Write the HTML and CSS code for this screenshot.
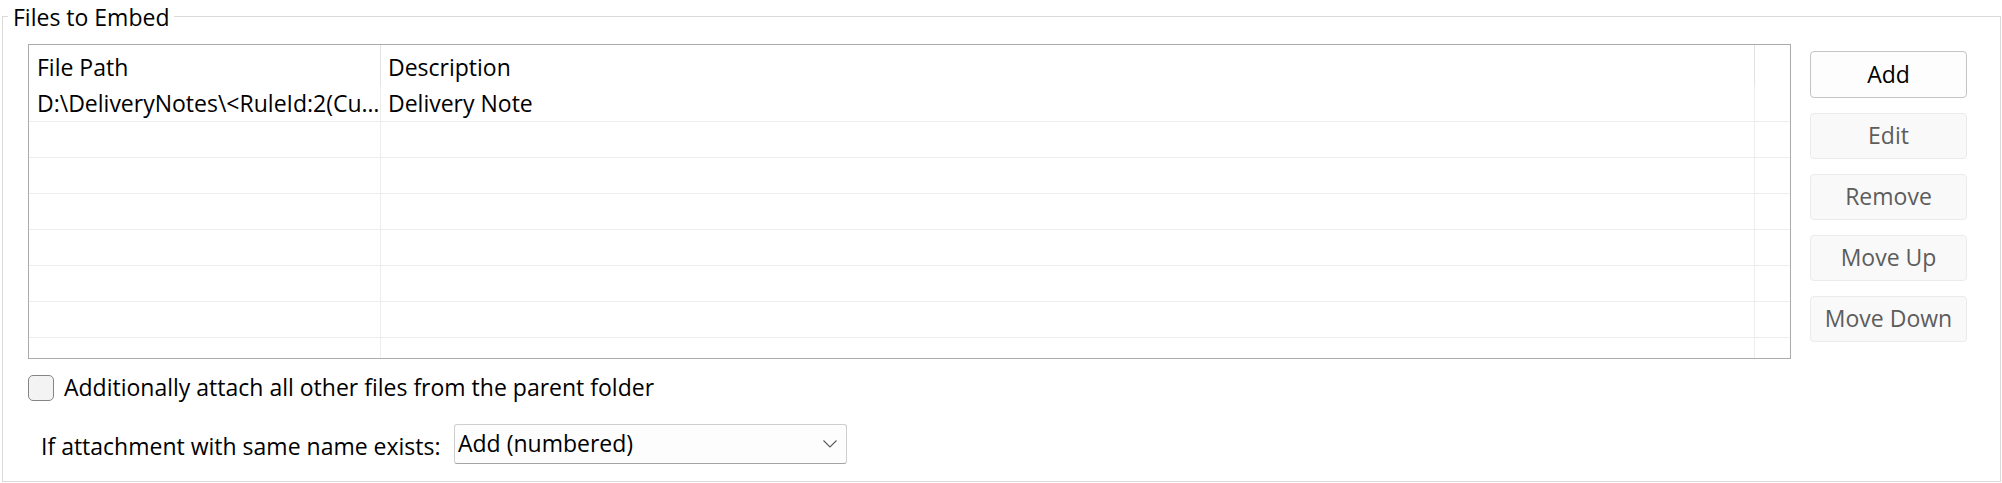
FILE: index.html
```html
<!DOCTYPE html>
<html>
<head>
<meta charset="utf-8">
<link rel="stylesheet" href="styles.css">
</head>
<body>
<div class="group">
  <div class="title">Files to Embed</div>
  <div class="top">
    <div class="list">
      <div class="row head">
        <div class="c c1">File Path</div>
        <div class="c c2">Description</div>
        <div class="c c3"></div>
      </div>
      <div class="row">
        <div class="c c1">D:\DeliveryNotes\&lt;RuleId:2(Cu…</div>
        <div class="c c2">Delivery Note</div>
        <div class="c c3"></div>
      </div>
      <div class="row"><div class="c c1"></div><div class="c c2"></div><div class="c c3"></div></div>
      <div class="row"><div class="c c1"></div><div class="c c2"></div><div class="c c3"></div></div>
      <div class="row"><div class="c c1"></div><div class="c c2"></div><div class="c c3"></div></div>
      <div class="row"><div class="c c1"></div><div class="c c2"></div><div class="c c3"></div></div>
      <div class="row"><div class="c c1"></div><div class="c c2"></div><div class="c c3"></div></div>
      <div class="row"><div class="c c1"></div><div class="c c2"></div><div class="c c3"></div></div>
      <div class="row"><div class="c c1"></div><div class="c c2"></div><div class="c c3"></div></div>
    </div>
    <div class="buttons">
      <div class="btn primary">Add</div>
      <div class="btn">Edit</div>
      <div class="btn">Remove</div>
      <div class="btn">Move Up</div>
      <div class="btn">Move Down</div>
    </div>
  </div>
  <div class="check">
    <span class="box"></span>
    <span class="check-label">Additionally attach all other files from the parent folder</span>
  </div>
  <div class="combo-row">
    <span class="combo-label">If attachment with same name exists:</span>
    <div class="combo">
      <span class="combo-text">Add (numbered)</span>
      <svg class="chev" width="14" height="8" viewBox="0 0 14 8"><polyline points="0.5,0.5 7,7 13.5,0.5" fill="none" stroke="#5a5a5a" stroke-width="1.1"/></svg>
    </div>
  </div>
</div>
</body>
</html>
```

FILE: styles.css
```css
html, body {
  margin: 0;
  padding: 0;
  background: #ffffff;
}
body {
  width: 2002px;
  height: 483px;
  overflow: hidden;
  font-family: "Open Sans", "Noto Sans", sans-serif;
  font-size: 23px;
  color: #000;
}
.group {
  position: relative;
  box-sizing: border-box;
  margin: 16px 0 0 2px;
  width: 1999px;
  height: 466px;
  border: 1px solid #dadada;
}
.title {
  position: absolute;
  top: -16px;
  left: 5px;
  padding: 0 5px;
  line-height: 32px;
  background: #fff;
  white-space: nowrap;
}
.top {
  display: flex;
  align-items: flex-start;
  margin: 27px 0 0 25px;
}
.list {
  box-sizing: border-box;
  width: 1763px;
  height: 315px;
  border: 1px solid #ababab;
  overflow: hidden;
  background: #fff;
}
.row {
  display: flex;
  box-sizing: border-box;
  height: 36px;
  border-bottom: 1px solid #ededed;
}
.row.head {
  height: 41px;
  border-bottom: none;
}
.c {
  box-sizing: border-box;
  padding-left: 7px;
  line-height: 35px;
  white-space: nowrap;
  overflow: hidden;
  border-right: 1px solid #ededed;
}
.head .c {
  line-height: 36px;
  padding-top: 4px;
  border-right-color: #e3e3e3;
}
.c1 { width: 352px; padding-left: 8px; }
.c2 { width: 1374px; }
.c3 { flex: 1; border-right: none; }
.buttons {
  display: flex;
  flex-direction: column;
  gap: 15px;
  margin: 7px 0 0 19px;
}
.btn {
  box-sizing: border-box;
  width: 157px;
  height: 46px;
  border: 1px solid #ebebeb;
  border-radius: 4px;
  background: #f9f9f9;
  color: #5d5d5d;
  display: flex;
  align-items: center;
  justify-content: center;
  padding-bottom: 2px;
}
.btn.primary {
  height: 47px;
  border-color: #c4c4c4;
  background: #fdfdfd;
  color: #000;
}
.check {
  display: flex;
  align-items: center;
  margin: 16px 0 0 25px;
  height: 26px;
}
.box {
  box-sizing: border-box;
  width: 26px;
  height: 26px;
  border: 1px solid #858585;
  border-radius: 5px;
  background: #f3f3f3;
}
.check-label {
  margin-left: 10px;
  padding-bottom: 2px;
}
.combo-row {
  display: flex;
  align-items: center;
  margin: 23px 0 0 38px;
}
.combo-label {
  width: 413px;
  flex: none;
  padding-top: 4px;
}
.combo {
  box-sizing: border-box;
  width: 393px;
  height: 40px;
  border: 1px solid #cfcfcf;
  border-bottom-color: #a5a5a5;
  border-radius: 3px;
  background: #fdfdfd;
  display: flex;
  align-items: center;
  justify-content: space-between;
  padding: 0 9px 0 3px;
}
.combo-text {
  padding-bottom: 2px;
}
.chev {
  display: block;
}
```
